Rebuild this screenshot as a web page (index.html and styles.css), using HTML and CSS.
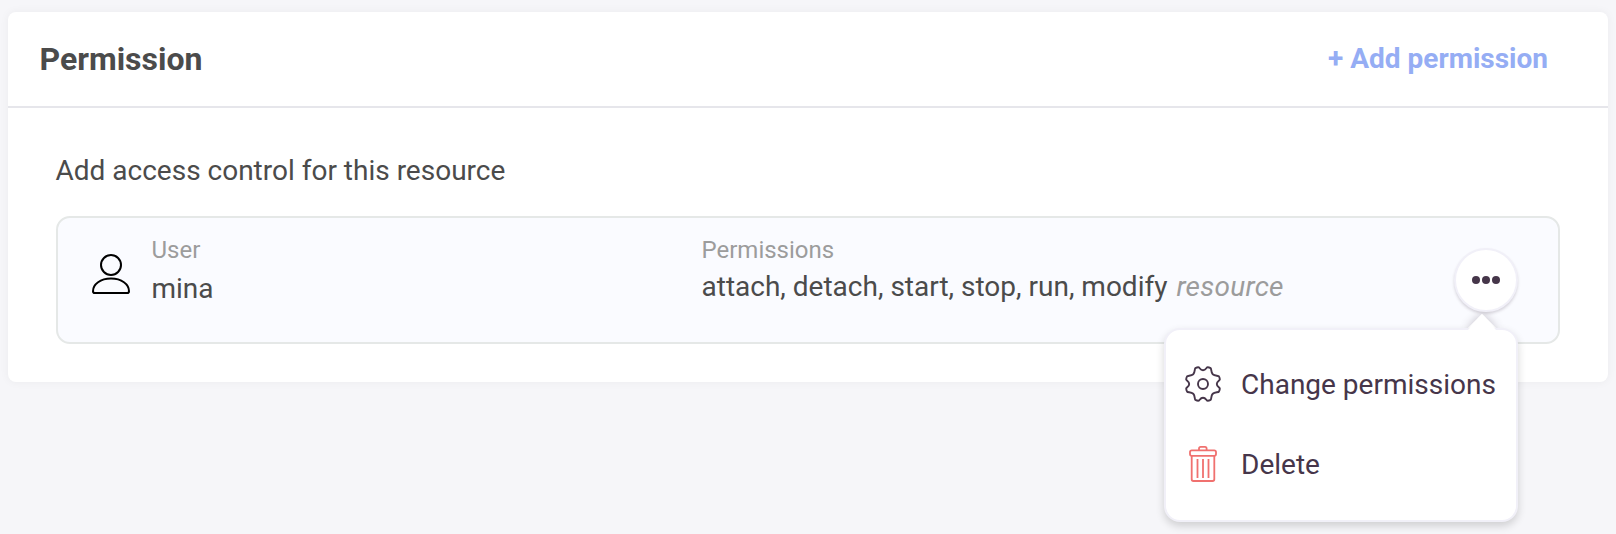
FILE: index.html
```html
<!DOCTYPE html>
<html lang="en">
<head>
<meta charset="utf-8">
<title>Permission</title>
<link rel="stylesheet" href="styles.css">
</head>
<body>
<section class="card">
  <header class="card-header">
    <h2 class="title">Permission</h2>
    <a class="add">+ Add permission</a>
  </header>
  <div class="card-body">
    <p class="intro">Add access control for this resource</p>
    <div class="row">
      <svg class="user-icon" width="40" height="42" viewBox="0 0 40 42" fill="none" stroke="#000" stroke-width="2">
        <circle cx="20" cy="12" r="10"/>
        <path d="M20 25.600C9.500 25.600 2 31 2 38.200Q2 40 3.800 40H36.200Q38 40 38 38.200C38 31 30.500 25.600 20 25.600Z"/>
      </svg>
      <div class="field field-user">
        <span class="label">User</span>
        <span class="value value-user">mina</span>
      </div>
      <div class="field">
        <span class="label">Permissions</span>
        <span class="value">attach, detach, start, stop, run, modify <em class="scope">resource</em></span>
      </div>
      <div class="actions">
        <button class="more" aria-label="Actions"><i class="dot"></i><i class="dot"></i><i class="dot"></i></button>
        <div class="menu">
          <div class="item">
            <svg class="item-icon" width="36" height="36" viewBox="-18 -18 36 36" fill="none" stroke="#46364a" stroke-width="1.900" stroke-linejoin="round">
              <circle r="5"/>
              <path d="M0 -13.800C2.600 -13.800 3.200 -16 4.200 -16.700Q5.300 -17.100 7.600 -15.900C8.600 -15.200 7.800 -11.800 9.760 -9.760C11.800 -7.800 15.200 -8.600 15.900 -7.600Q17.100 -5.300 16.700 -4.200C16 -3.200 13.800 -2.600 13.800 0C13.800 2.600 16 3.200 16.700 4.200Q17.100 5.300 15.900 7.600C15.200 8.600 11.800 7.800 9.760 9.760C7.800 11.800 8.600 15.200 7.600 15.900Q5.300 17.100 4.200 16.700C3.200 16 2.600 13.800 0 13.800C-2.600 13.800 -3.200 16 -4.200 16.700Q-5.300 17.100 -7.600 15.900C-8.600 15.200 -7.800 11.800 -9.760 9.760C-11.800 7.800 -15.200 8.600 -15.900 7.600Q-17.100 5.300 -16.700 4.200C-16 3.200 -13.800 2.600 -13.800 0C-13.800 -2.600 -16 -3.200 -16.700 -4.200Q-17.100 -5.300 -15.900 -7.600C-15.200 -8.600 -11.800 -7.800 -9.760 -9.760C-7.800 -11.800 -8.600 -15.200 -7.600 -15.900Q-5.300 -17.100 -4.200 -16.700C-3.200 -16 -2.600 -13.800 0 -13.800Z"/>
            </svg>
            <span>Change permissions</span>
          </div>
          <div class="item">
            <svg class="item-icon" width="36" height="36" viewBox="0 0 36 36" fill="none" stroke="#f0716f" stroke-width="1.800">
              <rect x="5" y="4.300" width="26" height="5.600" rx="1.800"/>
              <path d="M14 4V2.500Q14 .9 15.700 .9H20Q21.600 .9 21.600 2.500V4M6.700 10V33.300Q6.700 35 8.400 35H27.600Q29.300 35 29.300 33.300V10M12.500 13V32M18 13V32M23.500 13V32"/>
            </svg>
            <span>Delete</span>
          </div>
        </div>
      </div>
    </div>
  </div>
</section>
</body>
</html>
```

FILE: styles.css
```css
* { box-sizing: border-box; }
html { background: #f6f6f9; }
body { margin: 0; height: 534px; padding: 12px 8px; background: #f6f6f9; font: 28px/32px Roboto, sans-serif; color: #4b4b4b; }
.card { height: 370px; background: #fff; border-radius: 8px; box-shadow: 0 0 10px rgba(0,0,0,.05); }
.card-header { height: 96px; padding: 0 60px 0 31.5px; display: flex; align-items: center; justify-content: space-between; border-bottom: 2px solid #e6e6eb; }
.title { margin: 0; font-size: 32px; font-weight: 700; }
.add { color: #95adf4; font-weight: 700; }
.card-body { padding: 47px 48px 0; }
.intro { margin: 0 0 29px -.5px; }
.row { display: flex; height: 128px; background: #fafbff; border: 2px solid #e5e8e7; border-radius: 14px; padding: 18px 40px 0 33px; }
.user-icon { margin-top: 17px; flex: none; }
.field { display: flex; flex-direction: column; margin-left: 20.5px; white-space: nowrap; }
.field-user { width: 529.5px; }
.label { font-size: 24px; line-height: 28px; color: #9c9c9c; }
.value { margin-top: 7px; }
.value-user { margin-top: 9px; }
.scope { margin-left: 2px; letter-spacing: .25px; color: #9c9c9c; }
.actions { position: relative; margin-left: auto; margin-top: 12px; width: 64px; }
.actions::before { content: ""; position: absolute; right: 26px; top: 70px; width: 20px; height: 20px; transform: rotate(45deg); background: #fff; box-shadow: 0 0 10px rgba(70,54,74,.3); }
.more { position: relative; width: 64px; height: 64px; padding: 0; display: flex; align-items: center; justify-content: center; gap: 2px; border: 2px solid #f1f0f8; border-radius: 50%; background: #fff; box-shadow: 0 2px 3px rgba(70,54,74,.2); }
.dot { width: 8px; height: 8px; border-radius: 50%; background: #46364a; }
.menu { position: absolute; top: 80px; right: 0; width: 354px; height: 194px; padding: 15px 0 0 19px; background: #fff; border: 2px solid #f1f0f8; border-radius: 16px; box-shadow: 0 4px 8px rgba(0,0,0,.16); color: #46364a; }
.menu::before { content: ""; position: absolute; right: 20px; top: -16px; width: 28px; height: 16px; background: #fff; clip-path: polygon(50% 0, 100% 100%, 0 100%); }
.item { display: flex; align-items: center; height: 80px; gap: 20px; white-space: nowrap; }
.item-icon { flex: none; margin-top: -2px; }
```
